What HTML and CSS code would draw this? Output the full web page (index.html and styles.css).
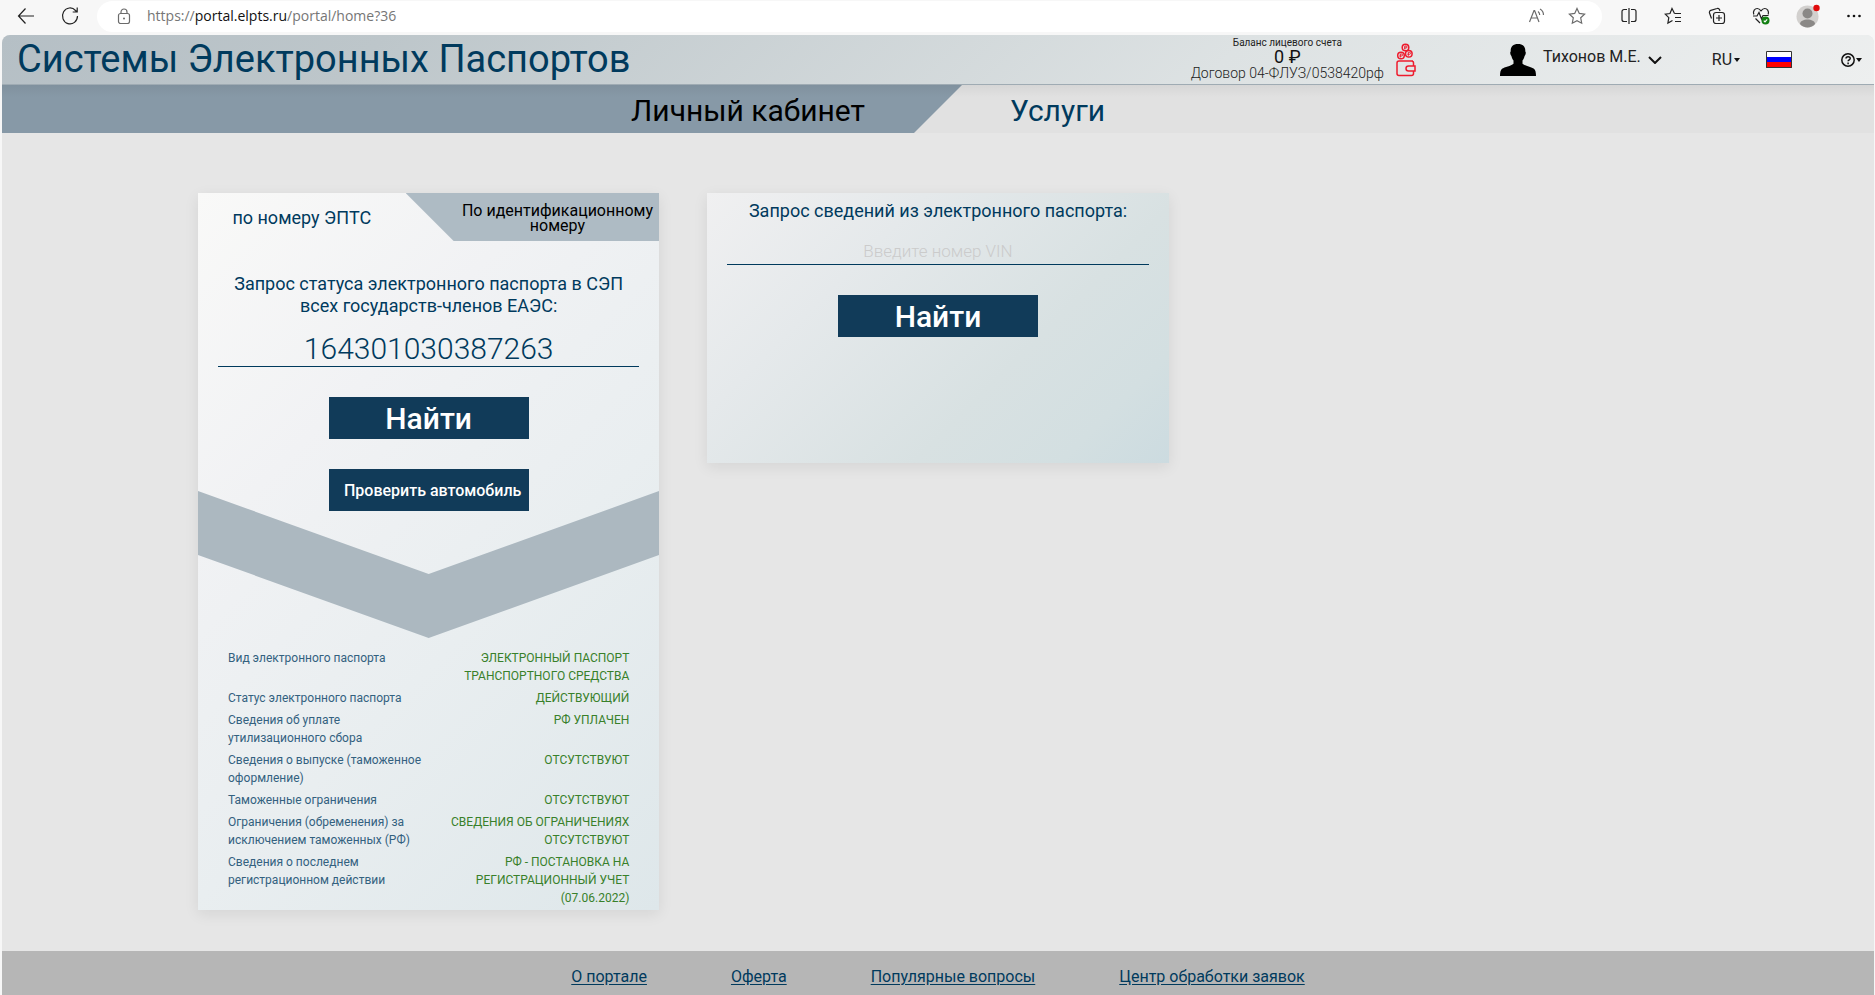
FILE: index.html
```html
<!DOCTYPE html>
<html lang="ru">
<head>
<meta charset="utf-8">
<title>Системы Электронных Паспортов</title>
<link rel="stylesheet" href="styles.css">
</head>
<body>
<div class="browser">
  <div class="browser-nav">
    <button class="tool" aria-label="Назад"><svg width="18" height="18" viewBox="0 0 18 18"><path d="M17 9H1.500M8.500 1.500L1.500 9l7 7.500"/></svg></button>
    <button class="tool" aria-label="Обновить"><svg width="18" height="20" viewBox="0 0 18 20"><path d="M16.500 10A7.500 8 0 1 1 14.500 4.500L16 6M16.200 1.500V6h-4.500"/></svg></button>
  </div>
  <div class="address">
    <svg class="lock" width="14" height="16" viewBox="0 0 14 16"><rect x="1.500" y="5.500" width="11" height="10" rx="2"/><path d="M4 5.500V4a3 3 0 0 1 6 0v1.500"/><circle class="fill" cx="7" cy="10.500" r="1"/></svg>
    <p class="url">https://<span class="host">portal.elpts.ru</span>/portal/home?36</p>
    <button class="tool muted" aria-label="Прочесть вслух"><svg width="18" height="16" viewBox="0 0 18 16"><path d="M1.500 14L6 2.500h.6L11 14M3 10h6.500M10 3.500c1.200.8 1.700 2 1.700 3.500M12 1c2.300 1.200 3.500 3.300 3.500 6"/></svg></button>
    <button class="tool muted" aria-label="В избранное"><svg width="18" height="18" viewBox="0 0 18 18"><path d="M9 1.500l2.300 4.900 5.300.7-3.900 3.700 1 5.400L9 13.600l-4.700 2.600 1-5.400L1.400 7.100l5.300-.7z"/></svg></button>
  </div>
  <div class="browser-tools">
    <button class="tool" aria-label="Разделить экран"><svg width="18" height="18" viewBox="0 0 18 18"><path d="M7 2.500H4a2 2 0 0 0-2 2v8a2 2 0 0 0 2 2h3M11 2.500h3a2 2 0 0 1 2 2v8a2 2 0 0 1-2 2h-3M9 1v16"/></svg></button>
    <button class="tool" aria-label="Избранное"><svg width="18" height="18" viewBox="0 0 18 18"><path d="M10.500 6.500L8 1.500 6 6.500l-4.700.7 3.500 3.500-.9 5.300 4.600-2.600M10.500 6.500H17M11 10.500h6M11 14.500h6"/></svg></button>
    <button class="tool" aria-label="Коллекции"><svg width="18" height="18" viewBox="0 0 18 18"><rect x="5.500" y="5.500" width="11" height="11" rx="2.500"/><path d="M11 8v6M8 11h6M3.500 11.500L1.500 6a2 2 0 0 1 1.300-2.600L9 1.500a2 2 0 0 1 2.600 1.300L12 4"/></svg></button>
    <button class="tool" aria-label="Производительность"><svg width="18" height="18" viewBox="0 0 18 18"><path d="M1.800 7.500C.5 4 3 1.500 5.300 1.500 7 1.500 8 2.500 9 3.800c1-1.300 2-2.300 3.700-2.300 2.300 0 4.600 2.500 3.500 6M1 9h4l2-3.500L9.500 12 11 8.500h5.500M3.500 11.500L8 16"/><circle class="ok" cx="13.500" cy="13.500" r="4"/><path class="tick" d="M11.800 13.600l1.200 1.200 2.200-2.400"/></svg></button>
    <button class="tool" aria-label="Профиль"><svg width="24" height="24" viewBox="0 0 24 24"><circle class="ava" cx="11.500" cy="12.500" r="11"/><circle class="ava-fg" cx="11.500" cy="9.500" r="5"/><path class="ava-fg" d="M4 20c0-6 15-6 15 0-3.500 4.500-11.500 4.500-15 0z"/><circle class="dot" cx="20.500" cy="4" r="3.200"/></svg></button>
    <button class="tool" aria-label="Меню"><svg width="16" height="6" viewBox="0 0 16 6"><circle class="fill" cx="2.500" cy="3" r="1.300"/><circle class="fill" cx="8" cy="3" r="1.300"/><circle class="fill" cx="13.500" cy="3" r="1.300"/></svg></button>
  </div>
</div>

<div class="app">
  <header class="header">
    <h1 class="title">Системы Электронных Паспортов</h1>
    <div class="account">
      <div class="balance">
        <p class="balance-label">Баланс лицевого счета</p>
        <p class="balance-value">0 ₽</p>
        <p class="contract">Договор 04-ФЛУЗ/0538420рф</p>
      </div>
      <svg class="wallet" width="20" height="34" viewBox="0 0 20 34"><circle cx="9.500" cy="4.500" r="3.300"/><circle cx="5" cy="12.500" r="3.300"/><circle cx="12.800" cy="10.800" r="3.300"/><path class="thin" d="M8.800 6.500V3h1.200a1 1 0 0 1 0 2H8M4.300 14.500V11h1.200a1 1 0 0 1 0 2h-2M12.300 12.800V9.300h1.200a1 1 0 0 1 0 2h-2"/><path d="M17.500 23v-3a2 2 0 0 0-2-2H3a2 2 0 0 0-2 2v10.500a2 2 0 0 0 2 2h12.500a2 2 0 0 0 2-2V28M19 23h-6.500a2.500 2.500 0 0 0 0 5H19zM3 18h14"/></svg>
    </div>
    <button class="user">
      <svg width="36" height="32" viewBox="0 0 36 32"><path d="M18 0c5 0 7.500 2.500 7.300 7.500.9.600.5 3.300-.7 4.500-.5 2.500-1.300 3.500-2.100 4.500v3.200c2.500 2.300 9 3.300 11.500 5 1.500 1.200 2 4 2 7.300H0c0-3.300.5-6.100 2-7.300 2.500-1.700 9-2.700 11.500-5v-3.200c-.8-1-1.600-2-2.100-4.500-1.200-1.200-1.600-3.900-.7-4.500C10.500 2.500 13 0 18 0z"/></svg>
      <span class="user-name">Тихонов М.Е.</span>
      <svg class="chev" width="14" height="8" viewBox="0 0 14 8"><path d="M1 1l6 6 6-6"/></svg>
    </button>
    <button class="lang">RU<span class="caret"></span></button>
    <svg class="flag" width="26" height="17" viewBox="0 0 26 17"><path fill="#fff" d="M0 0h26v6H0z"/><path fill="#00f" d="M0 6h26v5H0z"/><path fill="#f00" d="M0 11h26v6H0z"/><path fill="none" stroke="#333" d="M.5.500h25v16H.5z"/></svg>
    <button class="help" aria-label="Помощь"><svg width="14" height="14" viewBox="0 0 14 14"><circle cx="7" cy="7" r="6.200"/><path d="M5 5.600c0-2.600 4.200-2.500 4.200-.2C9.200 6.900 7.100 6.800 7.100 8.300M7.100 9.600v1.600"/></svg><span class="caret"></span></button>
  </header>

  <nav class="nav">
    <a class="nav-item nav-active" href="#">Личный кабинет</a>
    <a class="nav-item nav-other" href="#">Услуги</a>
  </nav>

  <main class="cards">
    <section class="card status">
      <div class="tabs">
        <button class="tab tab-active">по номеру ЭПТС</button>
        <button class="tab tab-other">По идентификационному номеру</button>
      </div>
      <form class="form">
        <label class="caption" for="epts">Запрос статуса электронного паспорта в СЭП всех государств-членов ЕАЭС:</label>
        <input class="field" id="epts" type="text" value="164301030387263">
        <button class="btn" type="button">Найти</button>
        <button class="btn btn-small" type="button">Проверить автомобиль</button>
      </form>
      <svg class="ribbon" viewBox="0 0 461 147" preserveAspectRatio="none"><path d="M0 0l230.500 83L461 0v64L230.500 147 0 64z"/></svg>
      <table class="result">
        <tr><th scope="row">Вид электронного паспорта</th><td>ЭЛЕКТРОННЫЙ ПАСПОРТ ТРАНСПОРТНОГО СРЕДСТВА</td></tr>
        <tr><th scope="row">Статус электронного паспорта</th><td>ДЕЙСТВУЮЩИЙ</td></tr>
        <tr><th scope="row">Сведения об уплате утилизационного сбора</th><td>РФ УПЛАЧЕН</td></tr>
        <tr><th scope="row">Сведения о выпуске (таможенное оформление)</th><td>ОТСУТСТВУЮТ</td></tr>
        <tr><th scope="row">Таможенные ограничения</th><td>ОТСУТСТВУЮТ</td></tr>
        <tr><th scope="row">Ограничения (обременения) за исключением таможенных (РФ)</th><td>СВЕДЕНИЯ ОБ ОГРАНИЧЕНИЯХ ОТСУТСТВУЮТ</td></tr>
        <tr><th scope="row">Сведения о последнем регистрационном действии</th><td>РФ - ПОСТАНОВКА НА РЕГИСТРАЦИОННЫЙ УЧЕТ (07.06.2022)</td></tr>
      </table>
    </section>

    <section class="card details">
      <form class="form">
        <label class="caption" for="vin">Запрос сведений из электронного паспорта:</label>
        <input class="field field-vin" id="vin" type="text" placeholder="Введите номер VIN">
        <button class="btn" type="button">Найти</button>
      </form>
    </section>
  </main>

  <footer class="footer">
    <a href="#">О портале</a>
    <a href="#">Оферта</a>
    <a href="#">Популярные вопросы</a>
    <a href="#">Центр обработки заявок</a>
  </footer>
</div>
</body>
</html>
```

FILE: styles.css
```css
* { box-sizing: border-box; }

body {
  margin: 0;
  min-height: 100vh;
  display: flex;
  flex-direction: column;
  background: #f7f7f7;
  color: #003a5d;
  font: 18px/22px Roboto, "Noto Sans", sans-serif;
}

h1, p { margin: 0; font-weight: 400; }

button {
  padding: 0;
  border: 0;
  background: none;
  color: inherit;
  font: inherit;
  cursor: pointer;
}

/* Browser toolbar */
.browser {
  display: flex;
  align-items: center;
  height: 32px;
  margin-bottom: 3px;
  padding-right: 13px;
}

.browser-nav { display: flex; gap: 26px; padding: 0 18px 0 17px; }

.tool { display: flex; align-items: center; }

.tool svg, .lock { fill: none; stroke: #222; stroke-width: 1.2; }

.muted svg, .lock { stroke: #6b6b6b; }

.tool .fill { fill: #111; stroke: none; }
.lock .fill { fill: #6b6b6b; stroke: none; }
.tool .ok { fill: #128012; stroke: none; }
.tool .tick { stroke: #fff; }
.tool .ava { fill: #d2d0ce; stroke: none; }
.tool .ava-fg { fill: #8a8886; stroke: none; }
.tool .dot { fill: #e00b0b; stroke: none; }

.address {
  flex: 1;
  display: flex;
  align-items: center;
  gap: 22px;
  height: 31px;
  padding: 0 16px 0 20px;
  border-radius: 16px;
  background: #fff;
}

.url { flex: 1; margin-left: -6px; color: #767676; font: 14px/20px "Open Sans", "Noto Sans", sans-serif; }
.host { color: #111; }

.browser-tools { display: flex; align-items: center; gap: 26px; padding-left: 18px; }

/* Portal */
.app {
  flex: 1;
  display: flex;
  flex-direction: column;
  margin: 0 1px 0 2px;
  border-radius: 8px 8px 0 0;
  overflow: hidden;
  background: #e6e6e6;
}

.header {
  display: flex;
  align-items: center;
  height: 50px;
  padding: 0 12px 0 15px;
  border-bottom: 1px solid #9fabb3;
  background: linear-gradient(135deg, #b5bfc5, #bdc6ca 20%, #dde2e3 65%, #edefef);
  color: #222;
}

.title { flex: 1; padding-bottom: 2px; color: #003a5d; font-size: 38px; line-height: 46px; }

.account { display: flex; align-items: center; gap: 12px; margin-right: 84px; }
.balance { padding-bottom: 2px; text-align: center; }
.balance-label { font-size: 10px; line-height: 12px; }
.balance-value { color: #111; font-size: 18px; line-height: 16px; }
.contract { font-size: 14px; line-height: 16px; font-weight: 300; }
.wallet { fill: none; stroke: #ee1c2e; stroke-width: 1.5; }
.wallet .thin { stroke-width: 1; }

.user { display: flex; align-items: center; gap: 7px; margin-right: 50px; }
.user-name { padding-bottom: 6px; font-size: 16px; }
.chev { fill: none; stroke: #111; stroke-width: 2; }

.lang, .help { display: flex; align-items: center; font-size: 16px; }
.lang { gap: 2px; margin-right: 26px; }
.help { gap: 1px; margin-left: 49px; }
.help svg { fill: none; stroke: #111; stroke-width: 1.5; }

.caret { border: 3px solid transparent; border-top: 4px solid #111; border-bottom: 0; }

.nav {
  display: flex;
  height: 48px;
  background: linear-gradient(#d6d6d6, #e1e1e1 12px);
}

.nav-item { font-size: 30px; line-height: 52px; text-decoration: none; }

.nav-active {
  width: calc(50% + 24px);
  padding-right: 97px;
  background: linear-gradient(#80919e, #8799a7 12px);
  clip-path: polygon(0 0, 100% 0, calc(100% - 48px) 100%, 0 100%);
  color: #000;
  text-align: right;
}

.nav-other { padding-left: 48px; color: #003a5d; }

.cards {
  flex: 1;
  display: grid;
  grid-template-columns: repeat(3, 1fr);
  align-items: start;
  gap: 48px;
  padding: 60px 196px 41px;
}

.card { box-shadow: 0 4px 14px rgba(0, 0, 0, .08); }

.status { padding-bottom: 1px; background: linear-gradient(135deg, #f9f9f8, #f1f2f4 30%, #e9eef0 60%, #dee7ea); }

.details {
  min-height: 270px;
  padding-top: 7px;
  background: linear-gradient(135deg, #f0f0f1, #e5e9eb 30%, #d8e1e2 65%, #d3dfe1 85%, #ccdbe0);
}

.tabs { display: grid; grid-template-columns: 45% 55%; height: 48px; }
.tab-active { padding-top: 2px; }

.tab-other {
  padding: 2px 4px 0 54px;
  background: #aebbc4;
  clip-path: polygon(0 0, 100% 0, 100% 100%, 48px 100%);
  color: #000;
  font-size: 16px;
  line-height: 15px;
}

.form { display: flex; flex-direction: column; align-items: center; padding: 0 20px; }
.status .form { padding-top: 32px; }

.caption { max-width: 400px; text-align: center; }

.field {
  width: 100%;
  height: 40px;
  margin: 10px 0 30px;
  padding: 4px 0 0;
  border: 0;
  border-bottom: 1px solid #003a5d;
  background: none;
  color: #003a5d;
  font: 300 30px/34px Roboto, sans-serif;
  text-align: center;
}

.field-vin { height: 30px; margin-top: 13px; padding-top: 2px; font-size: 17px; line-height: 24px; }
.field-vin::placeholder { color: #cbcbcb; opacity: 1; }

.btn {
  width: 200px;
  height: 42px;
  padding-top: 2px;
  background: #113b59;
  color: #fff;
  font-size: 30px;
  font-weight: 500;
  line-height: 40px;
}

.btn-small { margin-top: 30px; padding-left: 8px; font-size: 16px; }

.ribbon { display: block; width: 100%; height: 147px; margin: -20px 0 9px; fill: #acb8c0; }

.result {
  width: calc(100% - 60px);
  margin: 0 30px;
  border-collapse: collapse;
  table-layout: fixed;
  font-size: 12px;
  line-height: 18px;
}

.result th, .result td { padding: 2px 0; vertical-align: top; }
.result th { color: #33617f; font-weight: 400; text-align: left; }
.result td { color: #38802a; text-align: right; }

.footer {
  display: flex;
  justify-content: center;
  gap: 84px;
  padding: 15px 0 7px;
  background: #b6b6b6;
  font-size: 16px;
}

.footer a { color: #003a5d; text-underline-offset: 2px; }
```
